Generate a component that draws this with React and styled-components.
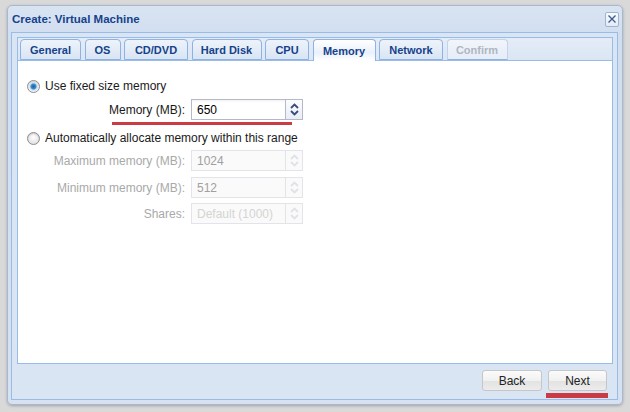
import React from 'react'
import styled, { createGlobalStyle } from 'styled-components'

const GlobalStyle = createGlobalStyle`
  html, body {
    margin: 0;
    padding: 0;
  }
  body {
    width: 630px;
    height: 412px;
    overflow: hidden;
    background: #d9d9d9;
    font-family: "Liberation Sans", Arial, sans-serif;
  }
`

const tabs = [
  { name: 'General', w: 61 },
  { name: 'OS', w: 36 },
  { name: 'CD/DVD', w: 64 },
  { name: 'Hard Disk', w: 70 },
  { name: 'CPU', w: 44 },
  { name: 'Memory', w: 63 },
  { name: 'Network', w: 64 },
  { name: 'Confirm', w: 61 },
]

const Window = styled.div`
  box-sizing: border-box;
  width: 616px;
  height: 400px;
  margin: 5px 0 0 7px;
  padding: 0 4px 4px 2px;
  display: flex;
  flex-direction: column;
  border: 1px solid #a8b8cd;
  border-radius: 5px;
  background: linear-gradient(#d9e4f2, #d1def0 30px, #d6e2f1);
  box-shadow: 0 1px 3px rgba(0, 0, 0, 0.25);
`

const Header = styled.div`
  height: 27px;
  display: flex;
  align-items: center;
  justify-content: space-between;
  padding-left: 2px;
`

const Title = styled.span`
  font-size: 11.5px;
  font-weight: bold;
  color: #15428b;
`

const CloseButton = styled.div`
  box-sizing: border-box;
  width: 14px;
  height: 15px;
  margin-right: -1px;
  display: flex;
  align-items: center;
  justify-content: center;
  border: 1px solid #9fb4d0;
  border-radius: 2px;
  background: linear-gradient(#f8fbff, #e3ebf6);
`

const Frame = styled.div`
  flex: 1;
  display: flex;
  flex-direction: column;
  margin-left: 1px;
  padding: 4px 4px 0 5px;
  border: 1px solid #99bbe8;
  background: #dae5f3;
`

const TabPanel = styled.div`
  height: 327px;
  box-sizing: border-box;
  display: flex;
  flex-direction: column;
  border: 1px solid #99bbe8;
`

const TabStrip = styled.div`
  display: flex;
  align-items: flex-end;
  gap: 3.5px;
  padding: 1px 2px 0 2px;
  background: linear-gradient(#e4ecf7, #dbe6f4);
  border-bottom: 1px solid #99bbe8;
`

const Tab = styled.div`
  box-sizing: border-box;
  width: ${p => p.$w}px;
  height: ${p => (p.$active ? 22 : 21)}px;
  margin-bottom: ${p => (p.$active ? -1 : 0)}px;
  display: flex;
  align-items: center;
  justify-content: center;
  font-size: 11px;
  font-weight: bold;
  color: ${p => (p.$disabled ? '#aeb6c2' : '#15428b')};
  border: 1px solid ${p => (p.$disabled ? '#c3d3e8' : '#8db2e3')};
  border-bottom: ${p => (p.$active ? 'none' : '1px solid #8db2e3')};
  border-radius: 4px 4px 0 0;
  background: ${p =>
    p.$active
      ? 'linear-gradient(#ffffff, #eaf1fa 60%, #ffffff)'
      : p.$disabled
      ? 'linear-gradient(#f1f5fb, #e6edf7)'
      : 'linear-gradient(#eef3fa, #d9e5f4)'};
`

const Body = styled.div`
  flex: 1;
  background: #ffffff;
  padding: 18px 0 0 9px;
  display: flex;
  flex-direction: column;
  font-size: 12px;
  color: #1a1a1a;
`

const RadioRow = styled.label`
  height: 14px;
  display: flex;
  align-items: center;
  gap: 5px;
  margin-top: ${p => p.$mt || 0}px;
`

const Radio = styled.span`
  box-sizing: border-box;
  width: 13px;
  height: 13px;
  border-radius: 50%;
  border: 1px solid #8c8c8c;
  background: ${p =>
    p.$checked
      ? 'radial-gradient(circle at 50% 50%, #1d5f9e 0, #3a8fd0 2.5px, #c6dcef 3.5px, #f4f4f4 5px)'
      : 'radial-gradient(circle at 50% 40%, #ffffff, #d8d8d8)'};
  box-shadow: inset 0 1px 1px rgba(0, 0, 0, 0.15);
`

const FieldRow = styled.div`
  display: grid;
  grid-template-columns: 142px 95px 17px;
  column-gap: 6px;
  align-items: center;
  height: 21px;
  margin-top: ${p => p.$mt || 0}px;
  margin-left: 16px;
  & > :nth-child(3) {
    margin-left: -6px;
  }
`

const Label = styled.span`
  text-align: right;
  color: ${p => (p.$disabled ? '#a9a9a9' : '#1a1a1a')};
`

const Input = styled.div`
  box-sizing: border-box;
  height: 21px;
  padding: 0 0 0 5px;
  display: flex;
  align-items: center;
  border: 1px solid ${p => (p.$disabled ? '#e2e4ea' : '#b5b8c8')};
  background: ${p => (p.$disabled ? '#fafafa' : 'linear-gradient(#f3f3f3, #fff 3px)')};
  color: ${p => (p.$disabled ? (p.$placeholder ? '#d4d4d4' : '#a0a0a0') : '#000')};
`

const Spinner = styled.div`
  box-sizing: border-box;
  width: 17px;
  height: 21px;
  display: flex;
  flex-direction: column;
  align-items: center;
  justify-content: space-around;
  padding: 2px 0;
  border: 1px solid ${p => (p.$disabled ? '#e2e4ea' : '#b5b8c8')};
  border-left: none;
  background: ${p => (p.$disabled ? '#fafafa' : 'linear-gradient(#fbfcfe, #e9eef6)')};
`

const Highlight = styled.div`
  width: 180px;
  height: 3px;
  margin: 2px 0 0 85px;
  background: #cc3b43;
`

const Footer = styled.div`
  height: 35px;
  display: flex;
  justify-content: flex-end;
  align-items: flex-start;
  gap: 6px;
  padding: 6px 6px 0 0;
  box-sizing: border-box;
`

const Button = styled.div`
  position: relative;
  box-sizing: border-box;
  width: ${p => p.$w}px;
  height: 21px;
  display: flex;
  align-items: center;
  justify-content: center;
  font-size: 12px;
  color: #222;
  border: 1px solid #c6c6c6;
  border-radius: 3px;
  background: linear-gradient(#fbfbfb, #f1f1f1 50%, #e2e2e2 51%, #ececec);
  ${p =>
    p.$marked &&
    `&::after {
      content: '';
      position: absolute;
      left: -3px;
      right: -2px;
      bottom: -8px;
      height: 5px;
      background: #cc3b43;
    }`}
`

function Chevron({ up, disabled }) {
  return (
    <svg width="9" height="6" viewBox="0 0 9 6">
      <path
        d={up ? 'M1 5 L4.5 1.5 L8 5' : 'M1 1 L4.5 4.5 L8 1'}
        fill="none"
        stroke={disabled ? '#dfe2e8' : '#3b4a7e'}
        strokeWidth="1.8"
      />
    </svg>
  )
}

function NumberField({ label, value, disabled, placeholder, mt }) {
  return (
    <FieldRow $mt={mt}>
      <Label $disabled={disabled}>{label}</Label>
      <Input $disabled={disabled} $placeholder={placeholder}>{value}</Input>
      <Spinner $disabled={disabled}>
        <Chevron up disabled={disabled} />
        <Chevron disabled={disabled} />
      </Spinner>
    </FieldRow>
  )
}

export default function App() {
  return (
    <>
      <GlobalStyle />
      <Window>
        <Header>
          <Title>Create: Virtual Machine</Title>
          <CloseButton>
            <svg width="10" height="10" viewBox="0 0 10 10">
              <path d="M1.5 1.5 L8.5 8.5 M8.5 1.5 L1.5 8.5" stroke="#3d5a8c" strokeWidth="1.3" />
            </svg>
          </CloseButton>
        </Header>
        <Frame>
          <TabPanel>
            <TabStrip>
              {tabs.map(t => (
                <Tab
                  key={t.name}
                  $w={t.w}
                  $active={t.name === 'Memory'}
                  $disabled={t.name === 'Confirm'}
                >
                  {t.name}
                </Tab>
              ))}
            </TabStrip>
            <Body>
              <RadioRow>
                <Radio $checked />
                Use fixed size memory
              </RadioRow>
              <NumberField label="Memory (MB):" value="650" mt={6} />
              <Highlight />
              <RadioRow $mt={6}>
                <Radio />
                Automatically allocate memory within this range
              </RadioRow>
              <NumberField label="Maximum memory (MB):" value="1024" disabled mt={5} />
              <NumberField label="Minimum memory (MB):" value="512" disabled mt={6} />
              <NumberField label="Shares:" value="Default (1000)" disabled placeholder mt={5} />
            </Body>
          </TabPanel>
          <Footer>
            <Button $w={60}>Back</Button>
            <Button $w={59} $marked>Next</Button>
          </Footer>
        </Frame>
      </Window>
    </>
  )
}
